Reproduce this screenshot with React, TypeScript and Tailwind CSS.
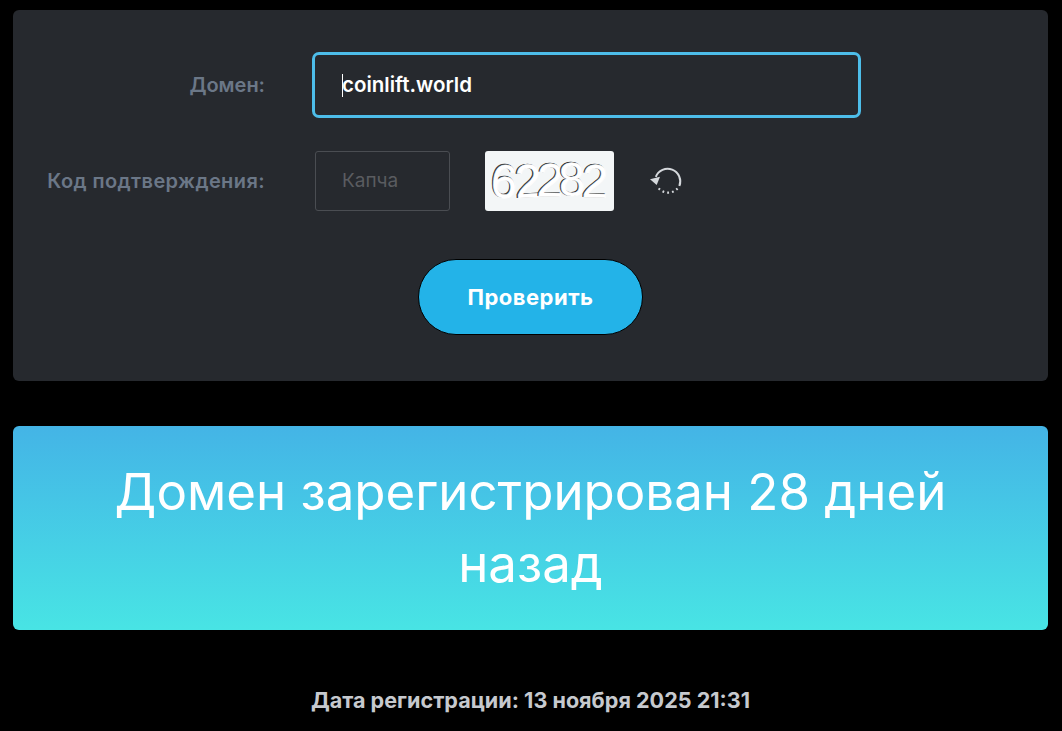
import React from 'react';

const fontSans = "font-['Inter','Noto_Sans',sans-serif]";

const digits = [
  { ch: '6', x: 5, y: 46, r: 4 },
  { ch: '2', x: 29, y: 46, r: -3 },
  { ch: '2', x: 51, y: 45, r: 2 },
  { ch: '8', x: 73, y: 44, r: -2 },
  { ch: '2', x: 96, y: 46, r: 2 },
];

const CaptchaImage = () => (
  <svg viewBox="0 0 129 60" className="block h-[60px] w-[129px] rounded-[3px] bg-[#f3f6f7]">
    <g fontFamily="'Liberation Sans', sans-serif" fontSize="47">
      {digits.map((d, i) => (
        <g key={i} transform={`rotate(${d.r} ${d.x + 13} 30)`}>
          <text x={d.x} y={d.y} fill="#2f3235" stroke="#2f3235" strokeWidth="0.8">{d.ch}</text>
          <text x={d.x + 1.1} y={d.y + 0.5} fill="#ffffff" stroke="#ffffff" strokeWidth="0.5">{d.ch}</text>
        </g>
      ))}
    </g>
  </svg>
);

const RefreshIcon = () => (
  <svg viewBox="0 0 36 36" className="ml-[34px] h-9 w-9" fill="none">
    <path d="M7.8 13.8 A12.6 12.6 0 1 1 31.4 23" stroke="#d5d8dc" strokeWidth="2" />
    <path d="M2 16.3 L12 13.7 L8.7 22 Z" fill="#d5d8dc" />
    <path d="M29.5 25.5 A12.6 12.6 0 0 1 10 24.5" stroke="#d5d8dc" strokeWidth="2.2" strokeDasharray="1.8 3" />
  </svg>
);

export default function App() {
  return (
    <div className={`h-[731px] overflow-hidden bg-black pl-[13px] pr-[14px] pt-[10px] ${fontSans}`}>
      <div className="h-[371px] rounded-[6px] bg-[#26292e] pt-[45px]">
        <div className="flex items-center">
          <label className="w-[252px] text-right text-[20px] font-semibold text-[#6b7787]">Домен:</label>
          <div className="relative ml-[50px] flex h-[60px] w-[543px] items-center rounded-[4px] pl-[27px] pt-px text-[20.5px] font-semibold text-white outline-[3px] outline-[#4dbde9]">
            <span className="absolute left-[27px] top-[19px] h-[23px] w-px bg-white" />
            coinlift.world
          </div>
        </div>
        <div className="mt-[36px] flex items-center">
          <label className="w-[252px] text-right text-[20px] font-semibold tracking-[0.4px] text-[#6b7787]">Код подтверждения:</label>
          <div className="ml-[50px] flex h-[60px] w-[135px] items-center rounded-[3px] border border-[#4a4d52] pl-[26px] text-[19px] text-[#5a5c60]">
            Капча
          </div>
          <div className="ml-[35px]">
            <CaptchaImage />
          </div>
          <RefreshIcon />
        </div>
        <div className="mt-[48px] flex justify-center">
          <button className="h-[76px] w-[225px] rounded-full border border-black bg-[#23b3e8] text-[22px] font-bold tracking-[0.5px] text-white">
            Проверить
          </button>
        </div>
      </div>
      <div className="mt-[45px] flex h-[204px] items-center justify-center rounded-[6px] bg-gradient-to-b from-[#44b4e6] to-[#48e4e4] px-[90px] text-center text-[51px] leading-[72px] text-white">
        Домен зарегистрирован 28 дней назад
      </div>
      <p className="mt-[54px] text-center text-[21.6px] font-bold text-[#c6c9ce]">Дата регистрации: 13 ноября 2025 21:31</p>
    </div>
  );
}
